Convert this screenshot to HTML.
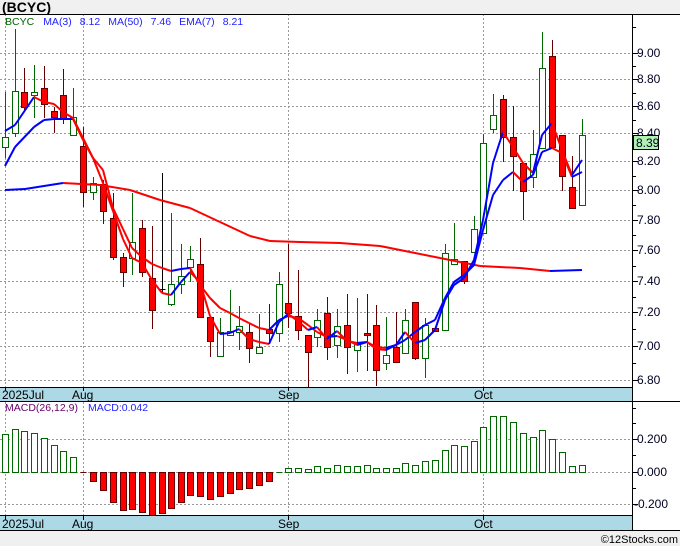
<!DOCTYPE html>
<html><head><meta charset="utf-8"><style>
html,body{margin:0;padding:0;background:#f0f0f0;width:680px;height:546px;overflow:hidden;font-family:"Liberation Sans",sans-serif}
svg{display:block}
</style></head><body>
<svg id="s" width="680" height="546" xmlns="http://www.w3.org/2000/svg" font-family="Liberation Sans, sans-serif">
<rect x="0" y="0" width="680" height="546" fill="#f0f0f0"/>
<rect x="0" y="14" width="680" height="517" fill="#fff"/>
<text x="2" y="12" font-size="14" font-weight="bold" fill="#000">(BCYC)</text>
<g id="g"></g>
</svg>
<script>
var g=document.getElementById('g'),h='';
function L(x1,y1,x2,y2,c,w,d){h+='<line x1="'+x1+'" y1="'+y1+'" x2="'+x2+'" y2="'+y2+'" stroke="'+c+'" stroke-width="'+(w||1)+'"'+(d?' stroke-dasharray="'+d+'"':'')+'/>';}
function T(x,y,t,c,s,a){h+='<text x="'+x+'" y="'+y+'" fill="'+c+'" font-size="'+(s||11)+'"'+(a?' text-anchor="'+a+'"':'')+'>'+t+'</text>';}
var pg=[[53,'9.00'],[79,'8.80'],[106,'8.60'],[133,'8.40'],[161,'8.20'],[190,'8.00'],[220,'7.80'],[250,'7.60'],[281,'7.40'],[312,'7.20'],[346,'7.00'],[380,'6.80']];
pg.forEach(function(p){L(0,p[0]+.5,632,p[0]+.5,'#999',1,'2,2');L(632,p[0]+.5,638,p[0]+.5,'#000');T(637,p[0]+4,p[1],'#002',12);});
for(var i=0;i<pg.length-1;i++){var m=Math.round((pg[i][0]+pg[i+1][0])/2)+.5;L(632,m,636,m,'#000');}
L(632,27.5,636,27.5,'#000');
[5,83,288,483].forEach(function(x){L(x+.5,14,x+.5,387,'#999',1,'2,2');L(x+.5,402,x+.5,516,'#999',1,'2,2');});
[[439,'0.200'],[472,'0.000'],[504,'-0.200']].forEach(function(p){L(0,p[0]+.5,632,p[0]+.5,'#999',1,'2,2');L(632,p[0]+.5,638,p[0]+.5,'#000');T(p[1][0]=='-'?634:637,p[0]+4,p[1],'#002',12);});
[408,423,455,488].forEach(function(y){L(632,y+.5,636,y+.5,'#000');});
var C=[[5,137,147,92,158,'g'],[15,91,133,29,137,'g'],[24,92,107,68,110,'r'],[34,92,95,65,118,'g'],[44,88,104,66,118,'r'],[54,111,117,107,133,'r'],[63,95,119,69,124,'r'],[73,117,135,88,135,'g'],[83,146,192,127,207,'r'],[93,183,192,177,200,'g'],[103,184,211,180,224,'r'],[113,218,257,193,260,'r'],[123,257,272,253,287,'r'],[132,242,258,193,275,'g'],[142,228,272,220,277,'r'],[152,278,310,226,329,'r'],[162,289,290,173,292,'k'],[171,284,304,213,306,'g'],[181,276,284,244,294,'g'],[190,259,267,246,282,'g'],[200,264,317,238,317,'r'],[210,317,341,317,357,'r'],[220,332,356,318,356,'g'],[230,331,335,290,335,'g'],[239,326,332,306,350,'g'],[249,332,348,324,363,'r'],[259,347,353,314,353,'g'],[269,329,333,304,343,'r'],[279,284,333,272,342,'g'],[288,303,313,244,328,'r'],[298,316,330,270,340,'r'],[308,335,352,335,387,'r'],[317,320,337,309,347,'g'],[327,313,347,297,360,'r'],[337,326,345,309,358,'g'],[347,325,347,294,374,'r'],[357,343,350,298,372,'g'],[367,333,335,294,371,'r'],[376,325,370,305,386,'r'],[386,355,363,317,370,'g'],[396,347,362,312,362,'r'],[405,320,353,309,353,'g'],[415,302,358,302,360,'r'],[425,325,358,318,378,'g'],[435,328,331,328,331,'r'],[445,253,330,244,330,'g'],[454,259,264,223,264,'g'],[464,261,281,261,284,'r'],[474,229,252,216,252,'g'],[483,143,233,134,233,'g'],[493,115,129,94,133,'g'],[503,99,137,95,162,'r'],[513,137,156,106,191,'r'],[523,163,191,163,220,'r'],[533,154,177,130,188,'g'],[542,68,148,32,148,'g'],[552,56,147,40,147,'r'],[562,135,176,135,191,'r'],[572,187,208,156,209,'r'],[582,135,205,119,205,'g']];
C.forEach(function(c){var x=c[0]+.5,t=c[5];var wc=t=='g'?'#060':(t=='r'?'#600':'#000');
L(x,c[3],x,c[4],wc);
if(t=='k'){L(x-3,c[1]+.5,x+3,c[1]+.5,'#000');return;}
h+='<rect x="'+(x-3)+'" y="'+(c[1]+.5)+'" width="6" height="'+Math.max(1,c[2]-c[1])+'" fill="'+(t=='g'?'#fff':'#f00')+'" stroke="'+(t=='g'?'#060':'#600')+'"/>';});
function P(pts){for(var i=0;i<pts.length-1;i++){var a=pts[i],b=pts[i+1];L(a[0],a[1],b[0],b[1],b[1]<=a[1]?'#00f':'#f00',2);}}
P([[5,190],[25,189],[63,183],[100,185],[130,190],[160,200],[190,208],[220,222],[250,236],[270,241],[300,242],[340,243],[380,246],[410,252],[440,258],[480,266],[520,268],[550,271],[582,270]]);
P([[5,166],[15,147],[34,127],[44,120],[54,119],[63,119],[73,119],[83,140],[93,158],[103,170],[113,208],[123,229],[132,248],[142,257],[152,264],[162,268],[171,271],[181,269],[190,268],[200,285],[210,298],[220,308],[230,313],[239,318],[249,323],[259,328],[269,330],[279,320],[288,316],[298,318],[308,325],[317,332],[327,337],[337,336],[347,340],[357,345],[367,342],[376,349],[386,350],[396,345],[405,340],[415,332],[425,325],[435,320],[445,298],[454,282],[464,275],[474,265],[483,230],[493,195],[503,180],[513,172],[523,182],[533,175],[542,152],[552,148],[562,153],[572,177],[582,172]]);
P([[5,131],[15,125],[34,97],[44,102],[54,104],[63,112],[73,118],[83,138],[93,158],[103,183],[113,211],[123,239],[132,258],[142,263],[152,280],[162,293],[171,295],[181,282],[190,272],[200,282],[210,316],[220,334],[230,333],[239,329],[249,339],[259,342],[269,344],[279,322],[288,314],[298,321],[308,330],[317,327],[327,339],[337,331],[347,341],[357,343],[367,342],[376,347],[386,348],[396,345],[405,332],[415,343],[425,340],[435,330],[445,300],[454,285],[464,278],[474,260],[483,220],[493,163],[503,132],[513,147],[523,163],[533,173],[542,135],[552,123],[562,150],[572,175],[582,160]]);
var M=[434,429,431,433,438,445,451,457,472,481,490,502,510,509,512,515,513,508,502,495,496,499,496,493,489,488,485,481,472,468,468,469,466,468,465,466,466,465,468,468,468,463,465,461,460,450,445,446,441,427,416,416,422,433,437,430,439,452,466,465];
M.forEach(function(v,i){var x=C[i][0]+.5;if(Math.abs(v-472)<1){L(x-3,472.5,x+3,472.5,i<20?'#600':'#060');return;}
if(v<472)h+='<rect x="'+(x-3)+'" y="'+(v+.5)+'" width="6" height="'+(472-v)+'" fill="#fff" stroke="#060"/>';
else h+='<rect x="'+(x-3)+'" y="472.5" width="6" height="'+(v-472)+'" fill="#f00" stroke="#600"/>';});
h+='<rect x="0" y="387" width="632" height="15" fill="#add8e6"/><rect x="0" y="516" width="632" height="15" fill="#add8e6"/>';
L(0,14.5,680,14.5,'#000');L(0,387.5,632,387.5,'#000');L(0,401.5,680,401.5,'#000');L(0,515.5,632,515.5,'#000');L(0,530.5,680,530.5,'#000');L(632.5,14,632.5,531,'#000');
[[2,'2025Jul'],[72,'Aug'],[278,'Sep'],[474,'Oct']].forEach(function(a){T(a[0],399,a[1],'#000',12);T(a[0],528,a[1],'#000',12);});
[5,83,288,483].forEach(function(x){L(x+.5,387,x+.5,391,'#000');L(x+.5,516,x+.5,520,'#000');});
h+='<rect x="633.5" y="135.5" width="25" height="14" fill="#b0f0b0" stroke="#000"/>';T(636,147,'8.39','#002',12);
h+='<text x="5" y="25" font-size="10.5"><tspan fill="#060">BCYC</tspan><tspan fill="#22f" dx="9">MA(3)</tspan><tspan fill="#22f" dx="8">8.12</tspan><tspan fill="#22f" dx="8">MA(50)</tspan><tspan fill="#22f" dx="8">7.46</tspan><tspan fill="#22f" dx="8">EMA(7)</tspan><tspan fill="#22f" dx="8">8.21</tspan></text>';
h+='<text x="5" y="411" font-size="10.5"><tspan fill="#606">MACD(26,12,9)</tspan><tspan fill="#22f" dx="10">MACD:0.042</tspan></text>';
T(678,543,'©12Stocks.com','#000',11,'end');
g.innerHTML=h;
</script>
</body></html>
